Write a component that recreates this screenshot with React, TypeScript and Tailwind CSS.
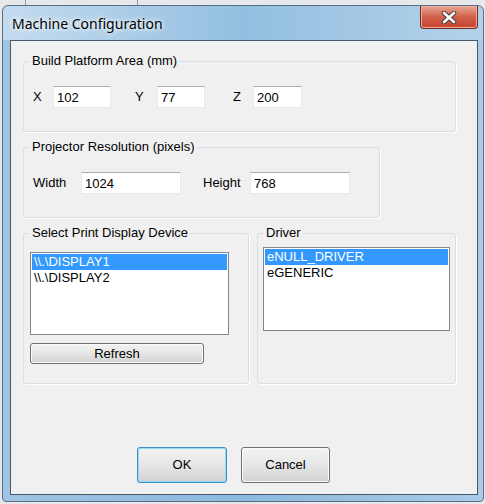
import React from "react";

const font = "font-['Liberation_Sans',Arial,sans-serif]";

function GroupBox({
  title,
  className,
  bodyClass,
  children,
}: {
  title: string;
  className: string;
  bodyClass: string;
  children: React.ReactNode;
}) {
  return (
    <fieldset
      className={`rounded-[3px] border border-[#d5dfe5] shadow-[1px_1px_0_#fff] ${className}`}
    >
      <legend className="ml-[6px] px-[2px] text-[13px] leading-[16px] text-black">
        {title}
      </legend>
      <div className={bodyClass}>{children}</div>
    </fieldset>
  );
}

function TextBox({ value, className }: { value: string; className: string }) {
  return (
    <input
      readOnly
      value={value}
      className={`h-[22px] border border-[#e3e9ef] border-t-[#abadb3] bg-white pl-[3px] text-[13px] text-black outline-none ${className}`}
    />
  );
}

function ListBox({ items, className }: { items: string[]; className: string }) {
  return (
    <div className={`border border-[#828790] bg-white p-[1px] ${className}`}>
      {items.map((item, i) => (
        <div
          key={item}
          className={`h-[16px] pl-[2px] text-[13px] leading-[16px] ${
            i === 0 ? "bg-[#3399ff] text-white" : "text-black"
          }`}
        >
          {item}
        </div>
      ))}
    </div>
  );
}

function WinButton({
  label,
  className,
  isDefault = false,
}: {
  label: string;
  className: string;
  isDefault?: boolean;
}) {
  return (
    <button
      className={`rounded-[3px] border bg-linear-to-b from-[#f3f3f3] via-[#e6e6e6] to-[#d2d2d2] text-[13px] text-black ${
        isDefault
          ? "border-[#3c8fc4] shadow-[inset_0_0_0_1px_#8fdcf7]"
          : "border-[#707070] shadow-[inset_0_0_0_1px_#fafafa]"
      } ${className}`}
    >
      {label}
    </button>
  );
}

export default function App() {
  return (
    <div className={`h-[504px] w-[485px] overflow-hidden bg-[#e6e8eb] ${font}`}>
      {/* what's behind the dialog */}
      <div className="flex h-[5px]">
        <div className="ml-[25px] w-px bg-[#8e979f]" />
        <div className="ml-[111px] w-px bg-[#8e979f]" />
      </div>

      {/* window frame */}
      <div className="ml-[2px] flex h-[497px] w-[482px] flex-col rounded-t-[6px] rounded-b-[4px] border border-[#5b6f84] bg-linear-to-r from-[#9fc4e4] via-[#8cb9dd] to-[#a9cbe7]">
        {/* title bar */}
        <div className="flex h-[34px] rounded-t-[6px] bg-linear-to-r from-[#c3dbef] via-[#93bfe0] to-[#b4d2ea]">
          <div className="pl-[9px] pt-[8px] font-['Noto_Sans',sans-serif] text-[14px] leading-[20px] text-black [text-shadow:0_0_8px_#fff,0_0_4px_#fff]">
            Machine Configuration
          </div>
          <button className="ml-auto mr-[5px] flex h-[23px] w-[58px] items-center justify-center rounded-b-[4px] border border-t-0 border-[#6e2a1e] bg-linear-to-b from-[#e8a897] via-[#d0604a] to-[#c7412a] shadow-[inset_0_0_0_1px_#f0b0a0]">
            <svg width="16" height="13" viewBox="0 0 16 13">
              <path d="M3 2 L13 11 M13 2 L3 11" stroke="#4a3b39" strokeWidth="4.6" strokeLinecap="round" />
              <path d="M3 2 L13 11 M13 2 L3 11" stroke="#ffffff" strokeWidth="2.6" strokeLinecap="round" />
            </svg>
          </button>
        </div>

        {/* client area */}
        <div className="ml-[7px] flex h-[455px] w-[468px] flex-col border border-[#475768] bg-[#f0f0f0] pl-[12px] pt-[12px]">
          <GroupBox title="Build Platform Area (mm)" className="h-[79px] w-[433px]" bodyClass="pl-[9px] pt-[17px]">
            <div className="flex items-center text-[13px] text-black">
              <span className="w-[20px]">X</span>
              <TextBox value="102" className="w-[58px]" />
              <span className="ml-[24px] w-[22px]">Y</span>
              <TextBox value="77" className="w-[48px]" />
              <span className="ml-[28px] w-[20px]">Z</span>
              <TextBox value="200" className="w-[49px]" />
            </div>
          </GroupBox>

          <GroupBox title="Projector Resolution (pixels)" className="mt-[7px] h-[79px] w-[357px]" bodyClass="pl-[9px] pt-[17px]">
            <div className="flex items-center text-[13px] text-black">
              <span className="w-[48px]">Width</span>
              <TextBox value="1024" className="w-[100px]" />
              <span className="ml-[22px] w-[47px]">Height</span>
              <TextBox value="768" className="w-[100px]" />
            </div>
          </GroupBox>

          <div className="mt-[7px] flex gap-[8px]">
            <GroupBox title="Select Print Display Device" className="h-[159px] w-[226px]" bodyClass="pl-[6px] pt-[11px]">
              <ListBox items={["\\\\.\\DISPLAY1", "\\\\.\\DISPLAY2"]} className="h-[83px] w-[199px]" />
              <WinButton label="Refresh" className="mt-[8px] h-[21px] w-[174px]" />
            </GroupBox>
            <GroupBox title="Driver" className="h-[159px] w-[199px]" bodyClass="pl-[5px] pt-[6px]">
              <ListBox items={["eNULL_DRIVER", "eGENERIC"]} className="h-[84px] w-[187px]" />
            </GroupBox>
          </div>

          <div className="ml-[114px] mt-[63px] flex gap-[14px]">
            <WinButton label="OK" isDefault className="h-[36px] w-[90px]" />
            <WinButton label="Cancel" className="h-[36px] w-[89px]" />
          </div>
        </div>
      </div>
    </div>
  );
}
